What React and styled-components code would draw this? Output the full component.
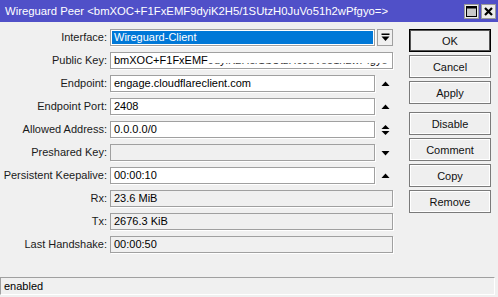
import React from 'react'
import styled, { createGlobalStyle } from 'styled-components'

const GlobalStyle = createGlobalStyle`
    body {
        margin: 0;
        background: #f0f0f0;
        font-family: "Liberation Sans", Arial, sans-serif;
    }
`

const rows = [
    { label: 'Interface', value: 'Wireguard-Client', kind: 'select' },
    { label: 'Public Key', value: 'bmXOC+F1FxEMF', tail: '9dyiK2H5/1SUtzH0JuVo51h2wPfgyo=', kind: 'wide' },
    { label: 'Endpoint', value: 'engage.cloudflareclient.com', arrow: 'up' },
    { label: 'Endpoint Port', value: '2408', arrow: 'up' },
    { label: 'Allowed Address', value: '0.0.0.0/0', arrow: 'both' },
    { label: 'Preshared Key', value: '', arrow: 'down', disabled: true },
    { label: 'Persistent Keepalive', value: '00:00:10', arrow: 'up' },
    { label: 'Rx', value: '23.6 MiB', kind: 'wide', disabled: true },
    { label: 'Tx', value: '2676.3 KiB', kind: 'wide', disabled: true },
    { label: 'Last Handshake', value: '00:00:50', kind: 'wide', disabled: true },
]

const buttons = ['OK', 'Cancel', 'Apply', null, 'Disable', 'Comment', 'Copy', 'Remove']

function Arrow({ dir }) {
    return (
        <svg width="9" height="12" viewBox="0 0 9 12">
            {(dir === 'up' || dir === 'both') && <polygon points={dir === 'both' ? '0.5,5 8.5,5 4.5,1' : '0.5,8 8.5,8 4.5,3.5'} fill="#000" />}
            {(dir === 'down' || dir === 'both') && <polygon points={dir === 'both' ? '0.5,7 8.5,7 4.5,11' : '0.5,4 8.5,4 4.5,8.5'} fill="#000" />}
        </svg>
    )
}

function App() {
    return (
        <Window>
            <GlobalStyle />
            <TitleBar>
                <Title>Wireguard Peer &lt;bmXOC+F1FxEMF9dyiK2H5/1SUtzH0JuVo51h2wPfgyo=&gt;</Title>
                <WinButtons>
                    <WinButton>
                        <svg width="11" height="11" viewBox="0 0 11 11">
                            <rect x="0.5" y="0.5" width="10" height="10" fill="#c8c8c8" stroke="#000" />
                            <rect x="0.5" y="0.5" width="10" height="2" fill="#000" />
                        </svg>
                    </WinButton>
                    <WinButton>
                        <svg width="11" height="11" viewBox="0 0 11 11">
                            <path d="M2 2 L9 9 M9 2 L2 9" stroke="#000" strokeWidth="2.2" />
                        </svg>
                    </WinButton>
                </WinButtons>
            </TitleBar>
            <Body>
                <Form>
                    {rows.map((r) => (
                        <React.Fragment key={r.label}>
                            <Label>{r.label}:</Label>
                            {r.kind === 'select' ? (
                                <>
                                    <Field $selected>{r.value}</Field>
                                    <DropButton>
                                        <svg width="9" height="9" viewBox="0 0 9 9">
                                            <rect x="0.5" y="0.5" width="8" height="1.5" fill="#000" />
                                            <polygon points="0.5,3.5 8.5,3.5 4.5,8" fill="#000" />
                                        </svg>
                                    </DropButton>
                                </>
                            ) : (
                                <>
                                    <Field $wide={r.kind === 'wide'} $disabled={r.disabled}>
                                        {r.value}
                                        {r.tail && <Garbled>{r.tail}</Garbled>}
                                    </Field>
                                    {r.arrow && <ArrowCell><Arrow dir={r.arrow} /></ArrowCell>}
                                </>
                            )}
                        </React.Fragment>
                    ))}
                </Form>
                <ButtonColumn>
                    {buttons.map((b, i) =>
                        b ? <Button key={b} $default={b === 'OK'}>{b}</Button> : <Spacer key={i} />
                    )}
                </ButtonColumn>
            </Body>
            <StatusBar>enabled</StatusBar>
        </Window>
    )
}

export default App

const Window = styled.div`
    width: 498px;
    height: 297px;
    display: flex;
    flex-direction: column;
    background: #f0f0f0;
    box-sizing: border-box;
    font-size: 11px;
    color: #000;
    overflow: hidden;
`
const TitleBar = styled.div`
    height: 22px;
    background: #5050c8;
    display: flex;
    align-items: center;
    justify-content: space-between;
    padding: 0 2px 0 5px;
`
const Title = styled.span`
    color: #fff;
    font-size: 11.3px;
    white-space: nowrap;
`
const WinButtons = styled.div`
    display: flex;
    gap: 2px;
`
const WinButton = styled.div`
    width: 15px;
    height: 15px;
    box-sizing: border-box;
    background: #ececec;
    border: 1px solid #9a9a9a;
    display: grid;
    place-items: center;
`
const Body = styled.div`
    flex: 1;
    display: flex;
    padding: 7px 0 0 3px;
`
const Form = styled.div`
    display: grid;
    grid-template-columns: 107px 265px 18px;
    grid-auto-rows: 17px;
    row-gap: 6px;
    align-content: start;
`
const Label = styled.div`
    grid-column: 1;
    text-align: right;
    padding-right: 3px;
    line-height: 17px;
    white-space: nowrap;
    color: #1a1a1a;
`
const Field = styled.div`
    grid-column: ${(p) => (p.$wide ? '2 / span 2' : '2')};
    box-sizing: border-box;
    border: 1px solid #a0a0a0;
    box-shadow: 1px 1px 0 #fff;
    background: ${(p) => (p.$selected ? '#0078d7' : p.$disabled ? '#f0f0f0' : '#fff')};
    color: ${(p) => (p.$selected ? '#fff' : '#000')};
    padding: 0 3px;
    line-height: 15px;
    white-space: nowrap;
    overflow: hidden;
    ${(p) => p.$selected && 'outline: 1px solid #fff; outline-offset: -2px;'}
`
const Garbled = styled.span`
    display: inline-block;
    clip-path: inset(68% 0 0 0);
`
const DropButton = styled.div`
    grid-column: 3;
    margin-left: 2px;
    box-sizing: border-box;
    border: 1px solid #a0a0a0;
    background: #f0f0f0;
    display: grid;
    place-items: center;
`
const ArrowCell = styled.div`
    grid-column: 3;
    display: grid;
    place-items: center;
    padding-left: 2px;
`
const ButtonColumn = styled.div`
    margin-left: 16px;
    width: 82px;
    display: flex;
    flex-direction: column;
    gap: 3px;
`
const Button = styled.div`
    height: 23px;
    box-sizing: border-box;
    border: 1px solid ${(p) => (p.$default ? '#000' : '#7a7a7a')};
    box-shadow: ${(p) => (p.$default ? 'inset 0 0 0 1px #555' : 'inset 0 0 0 1px #fff')};
    background: #efefef;
    display: grid;
    place-items: center;
    font-size: 11px;
    color: #111;
`
const Spacer = styled.div`
    height: 2px;
`
const StatusBar = styled.div`
    height: 18px;
    margin: 0 3px 2px 0;
    box-sizing: border-box;
    border-top: 1px solid #a0a0a0;
    border-left: 1px solid #a0a0a0;
    border-bottom: 1px solid #fff;
    border-right: 1px solid #fff;
    padding-left: 3px;
    line-height: 16px;
`
